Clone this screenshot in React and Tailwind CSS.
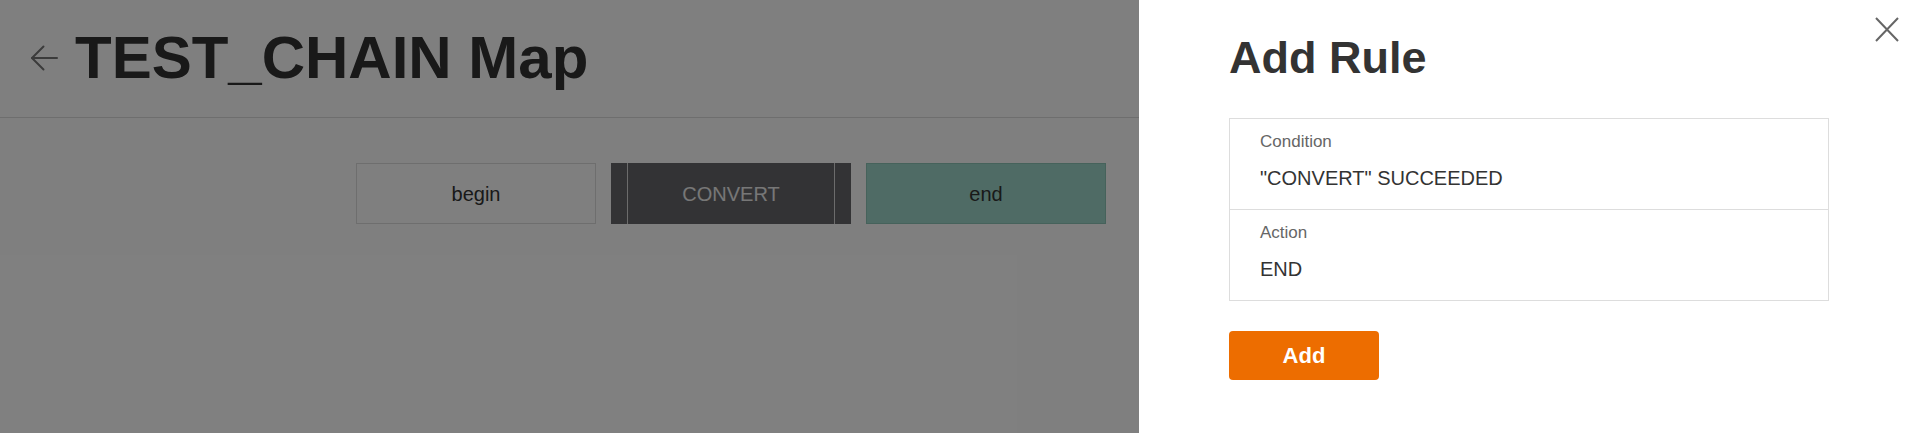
import React from 'react'

const nodes = [
    { id: 'begin', label: 'begin', kind: 'plain' },
    { id: 'convert', label: 'CONVERT', kind: 'selected' },
    { id: 'end', label: 'end', kind: 'end' },
]

function Node({ node }) {
    if (node.kind === 'selected') {
        return (
            <div className="flex h-[61px] w-[240px] bg-[#66666a] px-4">
                <div className="flex flex-1 items-center justify-center border-x border-[#d8d8d8] text-[20px] text-[#eee]">
                    {node.label}
                </div>
            </div>
        )
    }
    const look = node.kind === 'end'
        ? 'bg-[#9fd6cb] border-[#8cc4b6]'
        : 'bg-white border-[#dcdcdc]'
    return (
        <div className={`flex h-[61px] w-[240px] items-center justify-center border text-[20px] text-[#333] ${look}`}>
            {node.label}
        </div>
    )
}

function RuleRow({ label, value, first }) {
    return (
        <div className={`pl-[30px] pt-[13px] pb-[17px] ${first ? '' : 'border-t border-[#ddd]'}`}>
            <div className="text-[17px] leading-[20px] text-[#666]">{label}</div>
            <div className="mt-[12px] text-[20px] leading-[28px] text-[#333]">{value}</div>
        </div>
    )
}

export default function App() {
    return (
        <div className="relative h-[433px] w-full overflow-hidden bg-white font-['Liberation_Sans',Arial,sans-serif]">
            <header className="flex h-[118px] items-center gap-[17px] border-b border-[#ddd] pb-[2px] pl-[30px]">
                <svg width="28" height="26" viewBox="0 0 28 26" fill="none" stroke="#777" strokeWidth="2" strokeLinecap="round" strokeLinejoin="round">
                    <path d="M27 13H2" />
                    <path d="M13.5 1.5L2 13l11.5 11.5" />
                </svg>
                <h1 className="text-[60px] font-bold leading-none text-[#333]">TEST_CHAIN Map</h1>
            </header>

            <div className="flex gap-[15px] pl-[356px] pt-[45px]">
                {nodes.map(n => <Node key={n.id} node={n} />)}
            </div>

            {/* dim backdrop */}
            <div className="absolute inset-0 bg-black/50"></div>

            <aside className="absolute inset-y-0 right-0 w-[778px] bg-white pl-[90px] pt-[35px]">
                <button className="absolute right-[18px] top-[17px] text-[#666]">
                    <svg width="24" height="25" viewBox="0 0 24 25" fill="none" stroke="currentColor" strokeWidth="2">
                        <path d="M1 1l22 23M23 1L1 24" />
                    </svg>
                </button>

                <h2 className="mb-[38px] text-[45px] font-bold leading-none text-[#333]">Add Rule</h2>

                <div className="w-[600px] border border-[#ddd]">
                    <RuleRow first label="Condition" value={'"CONVERT" SUCCEEDED'} />
                    <RuleRow label="Action" value="END" />
                </div>

                <button className="mt-[30px] h-[49px] w-[150px] rounded bg-[#ed6d00] text-[22px] font-bold text-white">
                    Add
                </button>
            </aside>
        </div>
    )
}
